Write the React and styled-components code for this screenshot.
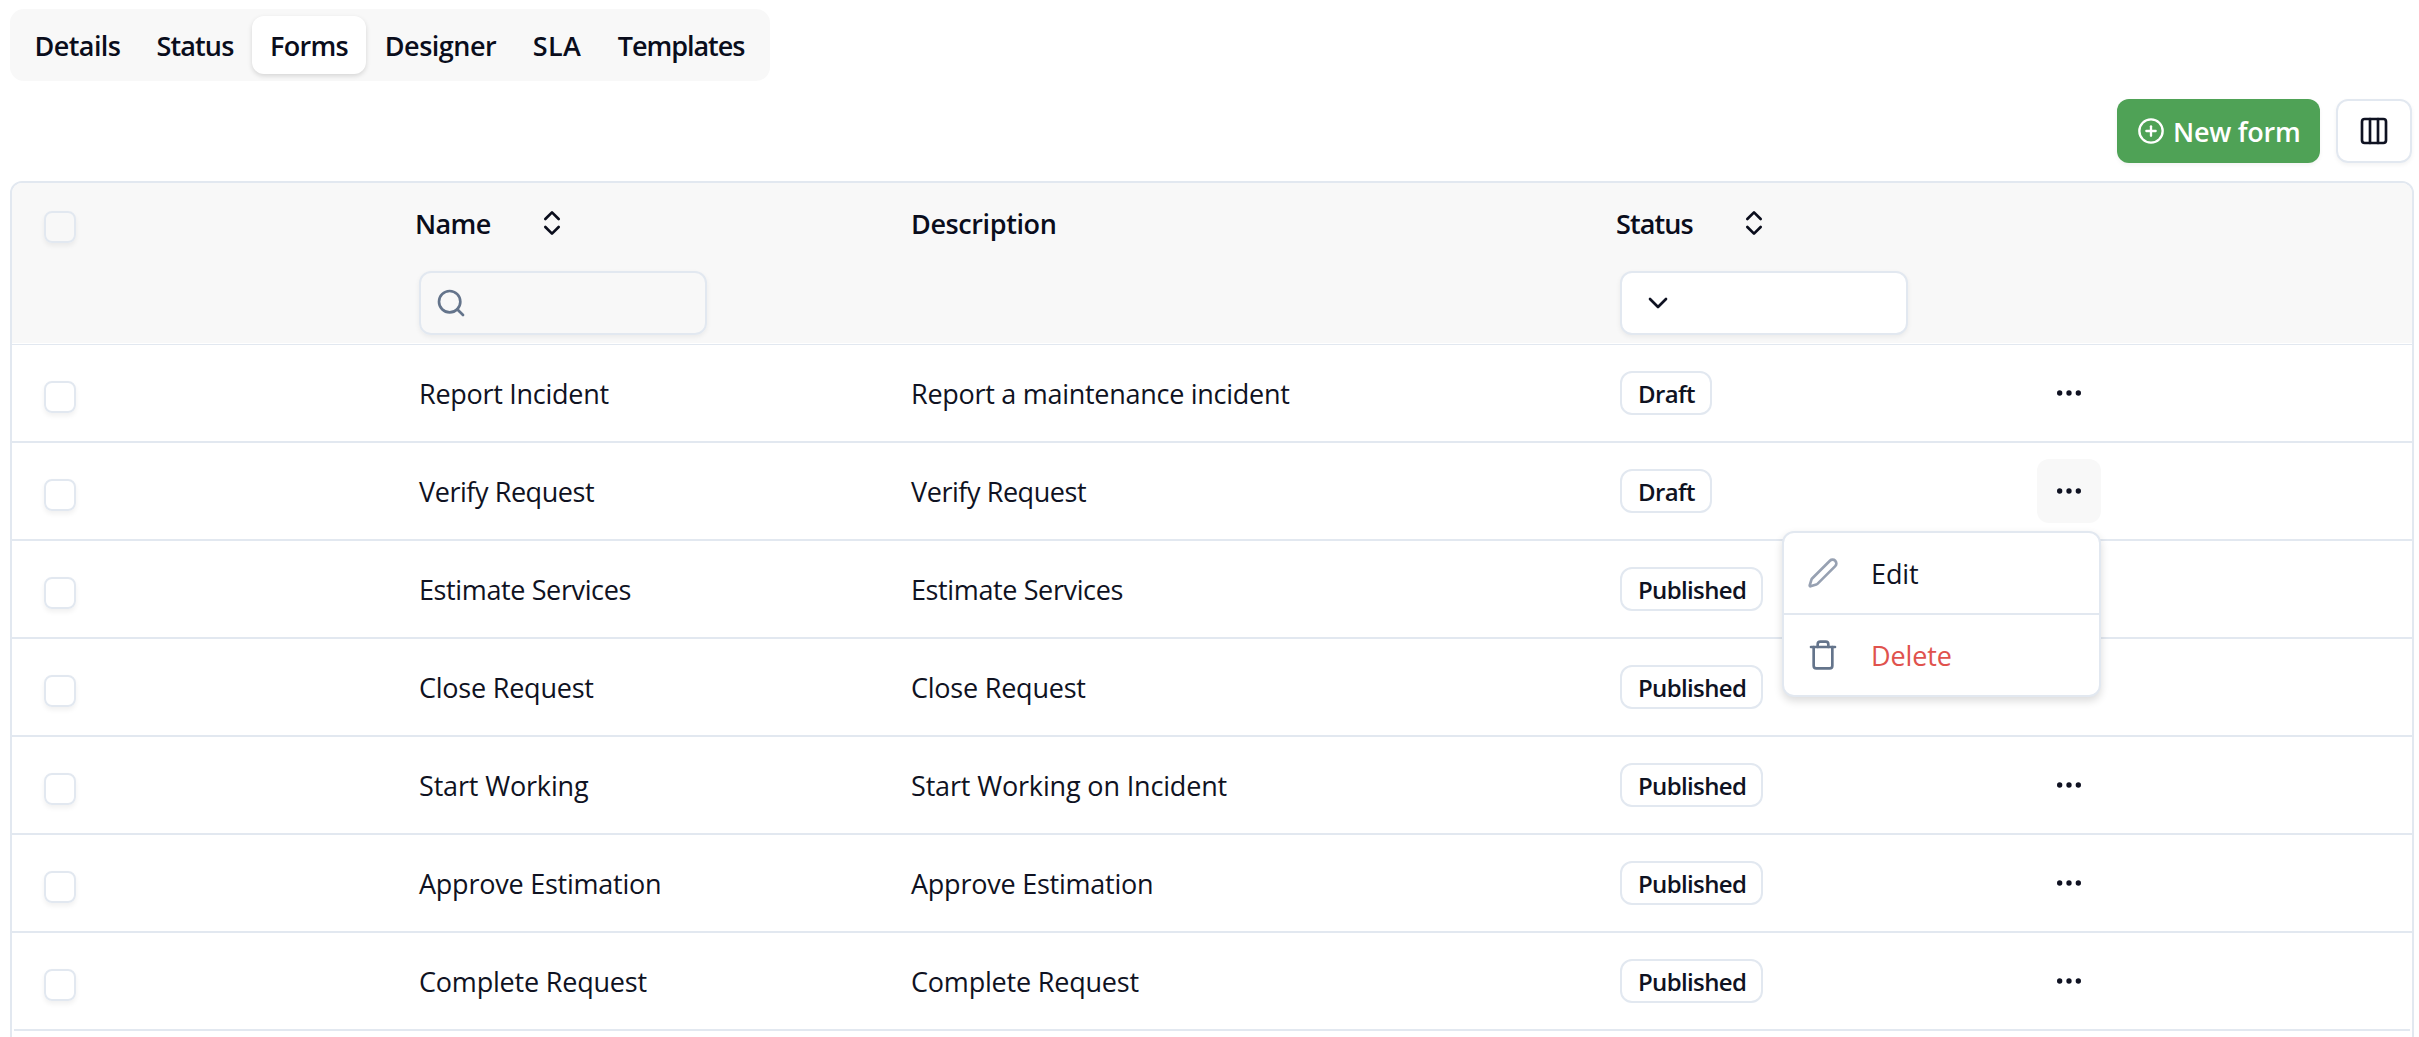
import React, { useState } from 'react';
import styled, { createGlobalStyle } from 'styled-components';
import {
    ChevronDown,
    ChevronsUpDown,
    CirclePlus,
    Columns3,
    Ellipsis,
    Pen,
    Search,
    Trash,
} from 'lucide-react';

const tabs = [
    { label: 'Details', width: 121, tracking: -0.59 },
    { label: 'Status', width: 114, tracking: -0.9 },
    { label: 'Forms', width: 114, tracking: -0.69 },
    { label: 'Designer', width: 149, tracking: -0.5 },
    { label: 'SLA', width: 84, tracking: 0.4 },
    { label: 'Templates', width: 164, tracking: -1.04 },
];

// tracking: letter spacing of the row's texts, in px
const forms = [
    { name: 'Report Incident', description: 'Report a maintenance incident', status: 'Draft', tracking: -0.28 },
    { name: 'Verify Request', description: 'Verify Request', status: 'Draft', tracking: -0.44 },
    { name: 'Estimate Services', description: 'Estimate Services', status: 'Published', tracking: -0.38 },
    { name: 'Close Request', description: 'Close Request', status: 'Published', tracking: -0.23 },
    { name: 'Start Working', description: 'Start Working on Incident', status: 'Published', tracking: -0.16 },
    { name: 'Approve Estimation', description: 'Approve Estimation', status: 'Published', tracking: -0.24 },
    { name: 'Complete Request', description: 'Complete Request', status: 'Published', tracking: -0.2 },
];

function RowMenu() {
    return (
        <Menu>
            <MenuItem>
                <Pen size={32} color="#97a1b2" />
                <span>Edit</span>
            </MenuItem>
            <MenuItem $danger>
                <Trash size={32} color="#64748b" />
                <span>Delete</span>
            </MenuItem>
        </Menu>
    );
}

export default function App() {
    const [activeTab, setActiveTab] = useState('Forms');
    const [openRow, setOpenRow] = useState('Verify Request');

    return (
        <Page>
            <GlobalStyle />
            <TabList>
                {tabs.map((tab) => (
                    <Tab
                        key={tab.label}
                        $width={tab.width}
                        $tracking={tab.tracking}
                        $active={tab.label === activeTab}
                        onClick={() => setActiveTab(tab.label)}
                    >
                        {tab.label}
                    </Tab>
                ))}
            </TabList>

            <Toolbar>
                <NewButton>
                    <CirclePlus size={28} />
                    <span>New form</span>
                </NewButton>
                <ColumnsButton>
                    <Columns3 size={32} />
                </ColumnsButton>
            </Toolbar>

            <Table>
                <HeaderRow>
                    <HeaderCell>
                        <CheckCell $header>
                            <Checkbox />
                        </CheckCell>
                    </HeaderCell>
                    <HeaderCell>
                        <HeaderTitle $tracking={-0.62}>
                            <span>Name</span>
                            <ChevronsUpDown size={32} />
                        </HeaderTitle>
                        <SearchBox>
                            <Search size={32} color="#64748b" />
                        </SearchBox>
                    </HeaderCell>
                    <HeaderCell>
                        <HeaderTitle $tracking={-0.39}>
                            <span>Description</span>
                        </HeaderTitle>
                    </HeaderCell>
                    <HeaderCell>
                        <HeaderTitle $tracking={-0.92}>
                            <span>Status</span>
                            <ChevronsUpDown size={32} />
                        </HeaderTitle>
                        <SelectBox>
                            <ChevronDown size={32} />
                        </SelectBox>
                    </HeaderCell>
                </HeaderRow>

                {forms.map((form) => (
                    <Row key={form.name}>
                        <CheckCell>
                            <Checkbox />
                        </CheckCell>
                        <NameCell $tracking={form.tracking}>{form.name}</NameCell>
                        <Cell $tracking={form.tracking}>{form.description}</Cell>
                        <StatusCell>
                            <Badge>{form.status}</Badge>
                        </StatusCell>
                        <ActionCell>
                            <MoreButton
                                $open={form.name === openRow}
                                onClick={() => setOpenRow(form.name === openRow ? null : form.name)}
                            >
                                <Ellipsis size={32} />
                            </MoreButton>
                            {form.name === openRow && <RowMenu />}
                        </ActionCell>
                    </Row>
                ))}
            </Table>
        </Page>
    );
}

const GlobalStyle = createGlobalStyle`
    * {
        box-sizing: border-box;
    }
    body {
        margin: 0;
        background: #fff;
        color: #0f1222;
        font-family: "Open Sans", "Noto Sans", sans-serif;
        font-size: 27px;
        line-height: 40px;
        overflow: hidden;
    }
    button {
        font: inherit;
        color: inherit;
        letter-spacing: inherit;
        border: 0;
        padding: 0;
        background: none;
    }
    svg {
        flex-shrink: 0;
    }
`;

const Page = styled.div`
    height: 1037px;
    padding: 9px 5px 0 10px;
    overflow: hidden;
`;

const TabList = styled.div`
    display: flex;
    width: 760px;
    height: 72px;
    padding: 7px;
    border-radius: 14px;
    background: #f8f8f8;
`;

const Tab = styled.button`
    width: ${(props) => props.$width}px;
    height: 58px;
    padding-top: 1px;
    border-radius: 12px;
    font-weight: 600;
    letter-spacing: ${(props) => props.$tracking}px;
    white-space: nowrap;
    color: #0a0d1c;
    background: ${(props) => (props.$active ? '#fff' : 'transparent')};
    box-shadow: ${(props) => (props.$active ? '0 2px 5px rgba(0, 0, 0, 0.14)' : 'none')};
`;

const Toolbar = styled.div`
    display: flex;
    justify-content: flex-end;
    gap: 16px;
    margin-top: 18px;
    padding-right: 2px;
`;

const NewButton = styled.button`
    display: flex;
    align-items: center;
    gap: 8px;
    width: 203px;
    height: 64px;
    padding-left: 20px;
    border-radius: 12px;
    font-weight: 600;
    letter-spacing: -0.23px;
    white-space: nowrap;
    color: #fff;
    background: #4fa256;
    box-shadow: 0 2px 4px rgba(0, 0, 0, 0.05);

    > span {
        padding-top: 1px;
    }
`;

const ColumnsButton = styled.button`
    display: flex;
    align-items: center;
    justify-content: center;
    width: 76px;
    height: 64px;
    border: 2px solid #e2e8f0;
    border-radius: 12px;
    box-shadow: 0 2px 4px rgba(0, 0, 0, 0.05);
`;

const Table = styled.div`
    height: 900px;
    margin-top: 18px;
    border: 2px solid #e2e8f0;
    border-radius: 12px;
`;

const HeaderRow = styled.div`
    display: grid;
    grid-template-columns: 403px 496px 705px 421px 1fr;
    height: 162px;
    padding-bottom: 1px;
    border-bottom: 1px solid #e2e8f0;
    border-radius: 10px 10px 0 0;
    background: #f8f8f8;
    background-clip: content-box;
`;

const Row = styled.div`
    display: grid;
    grid-template-columns: 403px 496px 705px 421px 1fr;
    align-items: center;
    height: 98px;
    border-bottom: 2px solid #e2e8f0;

    &:last-child {
        margin: 0 2px;
        grid-template-columns: 401px 496px 705px 421px 1fr;
    }
`;

const HeaderCell = styled.div`
    display: flex;
    flex-direction: column;
`;

const HeaderTitle = styled.div`
    display: flex;
    align-items: center;
    gap: 45px;
    height: 80px;
    font-weight: 600;
    letter-spacing: ${(props) => props.$tracking}px;
    color: #0a0d1c;

    > span {
        padding-top: 1px;
    }
`;

const CheckCell = styled.div`
    padding: ${(props) => (props.$header ? '28px 0 0 32px' : '8px 0 0 32px')};

    ${Row}:last-child > & {
        padding-left: 30px;
    }
`;

const Checkbox = styled.div`
    width: 32px;
    height: 32px;
    border: 2px solid #e2e8f0;
    border-radius: 8px;
    box-shadow: 0 3px 5px rgba(0, 0, 0, 0.06);
`;

const SearchBox = styled.div`
    display: flex;
    align-items: center;
    width: 288px;
    height: 64px;
    margin: 8px 0 0 4px;
    padding-left: 14px;
    border: 2px solid #e2e8f0;
    border-radius: 12px;
    box-shadow: 0 2px 5px rgba(0, 0, 0, 0.06);
`;

const SelectBox = styled(SearchBox)`
    padding-left: 20px;
    background: #fff;
`;

const Cell = styled.div`
    padding-top: 2px;
    letter-spacing: ${(props) => props.$tracking}px;
    white-space: nowrap;
`;

const NameCell = styled(Cell)`
    padding-left: 4px;
`;

const StatusCell = styled.div`
    display: flex;
    padding-left: 4px;
`;

const Badge = styled.span`
    height: 44px;
    padding: 0 15px 0 16px;
    border: 2px solid #e2e8f0;
    border-radius: 12px;
    font-size: 24px;
    font-weight: 600;
    letter-spacing: -0.64px;
    line-height: 42px;
`;

const ActionCell = styled.div`
    position: relative;
    width: 64px;
`;

const MoreButton = styled.button`
    display: flex;
    align-items: center;
    justify-content: center;
    width: 64px;
    height: 64px;
    border-radius: 12px;
    background: ${(props) => (props.$open ? '#f8f8f8' : 'transparent')};
`;

const Menu = styled.div`
    position: absolute;
    z-index: 10;
    top: 72px;
    right: 0;
    width: 319px;
    border: 2px solid #e2e8f0;
    border-radius: 12px;
    background: #fff;
    box-shadow: 0 4px 8px rgba(0, 0, 0, 0.14);
`;

const MenuItem = styled.div`
    display: flex;
    align-items: center;
    gap: 32px;
    height: 80px;
    padding-left: 23px;
    letter-spacing: -0.1px;
    color: ${(props) => (props.$danger ? '#e0524d' : '#0f1222')};

    > span {
        padding-top: 2px;
    }

    & + & {
        height: 82px;
        border-top: 2px solid #e2e8f0;
    }
`;
